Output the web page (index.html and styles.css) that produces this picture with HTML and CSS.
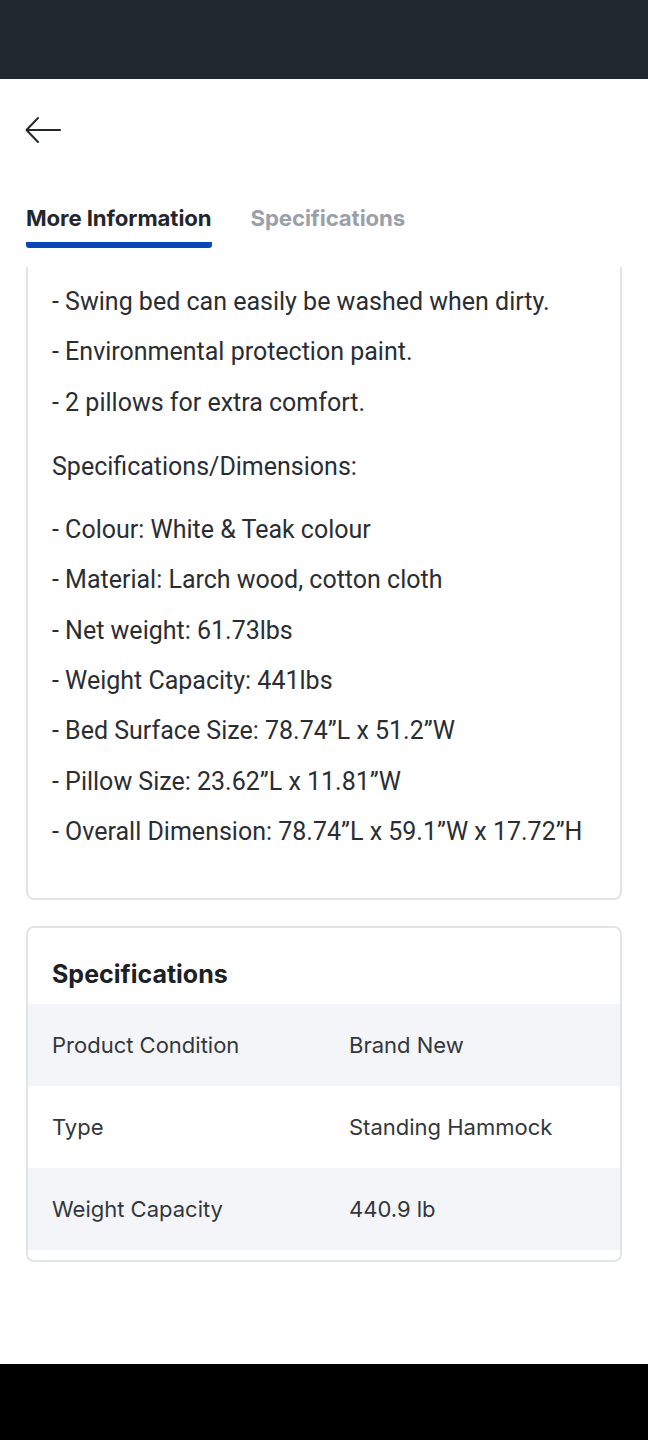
FILE: index.html
```html
<!DOCTYPE html>
<html lang="en">
<head>
<meta charset="utf-8">
<title>More Information</title>
<link rel="stylesheet" href="styles.css">
</head>
<body>
<div class="screen">
  <div class="status-bar"></div>
  <header class="top-bar">
    <button class="back" aria-label="Back">
      <svg width="36" height="28" viewBox="0 0 36 28" fill="none" stroke="#23272c" stroke-width="2" stroke-linecap="round" stroke-linejoin="round">
        <path d="M35 14H2"/>
        <path d="M13 2L1.5 14L13 26"/>
      </svg>
    </button>
  </header>
  <nav class="tabs">
    <div class="tab active">More Information</div>
    <div class="tab">Specifications</div>
  </nav>
  <main class="content">
    <section class="card desc">
      <p class="line">- Swing bed can easily be washed when dirty.</p>
      <p class="line">- Environmental protection paint.</p>
      <p class="line">- 2 pillows for extra comfort.</p>
      <p class="line heading">Specifications/Dimensions:</p>
      <p class="line">- Colour: White &amp; Teak colour</p>
      <p class="line">- Material: Larch wood, cotton cloth</p>
      <p class="line">- Net weight: 61.73lbs</p>
      <p class="line">- Weight Capacity: 441lbs</p>
      <p class="line">- Bed Surface Size: 78.74”L x 51.2”W</p>
      <p class="line">- Pillow Size: 23.62”L x 11.81”W</p>
      <p class="line">- Overall Dimension: 78.74”L x 59.1”W x 17.72”H</p>
    </section>
    <section class="card specs">
      <h2 class="specs-title">Specifications</h2>
      <div class="row shaded"><span class="label">Product Condition</span><span class="value">Brand New</span></div>
      <div class="row"><span class="label">Type</span><span class="value">Standing Hammock</span></div>
      <div class="row shaded"><span class="label">Weight Capacity</span><span class="value">440.9 lb</span></div>
    </section>
  </main>
  <div class="nav-bar"></div>
</div>
</body>
</html>
```

FILE: styles.css
```css
* { box-sizing: border-box; }
html, body { margin: 0; padding: 0; background: #fff; }
body { font-family: "Inter", "Roboto", sans-serif; color: #23272c; }

.screen { width: 648px; height: 1440px; display: flex; flex-direction: column; background: #fff; }

.status-bar { height: 79px; background: #22282f; flex: none; }

.top-bar { height: 101px; display: flex; align-items: flex-start; padding: 37px 0 0 25px; flex: none; }
.back { border: 0; background: none; padding: 0; margin: 0; display: flex; cursor: pointer; }

.tabs { display: flex; gap: 39px; padding: 0 26px; height: 87px; flex: none; }
.tab { font-family: "Inter", sans-serif; font-weight: 700; font-size: 22.2px; line-height: 26px; color: #9aa0a8; padding-top: 25px; height: 68px; letter-spacing: -0.1px; }
.tab.active { color: #23272c; border-bottom: 6px solid #0a47b8; border-radius: 0 0 3px 3px; }

.content { flex: 1; padding: 0 26px; }

.card { border: 2px solid #e1e5ea; border-radius: 8px; background: #fff; }

.desc { display: flex; flex-direction: column; gap: 20.3px; border-top: 0; border-top-left-radius: 0; border-top-right-radius: 0; padding: 20px 24px 51px 24px; }
.line { margin: 0; font-family: "Roboto", sans-serif; font-size: 25px; line-height: 30px; color: #2a2e33; }
.line.heading { margin: 14px 0 13px 0; }

.specs { margin-top: 26px; padding: 31px 0 10px 0; }
.specs-title { margin: 0 0 15px 0; padding: 0 24px; font-family: "Inter", sans-serif; font-weight: 700; font-size: 25px; line-height: 30px; color: #1d2126; }
.row { display: grid; grid-template-columns: 297px 1fr; align-items: center; height: 82px; padding: 0 24px; font-family: "Inter", sans-serif; font-size: 22px; color: #33373c; }
.row.shaded { background: #f3f5f8; }

.nav-bar { height: 76px; background: #000; flex: none; }
```
